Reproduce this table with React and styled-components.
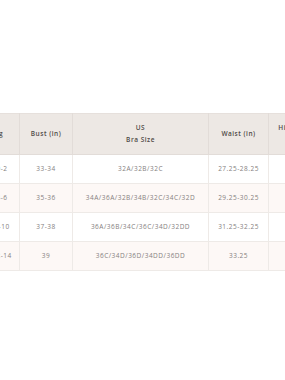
import React, { useLayoutEffect, useRef } from "react";
import styled, { createGlobalStyle } from "styled-components";

const Global = createGlobalStyle`
  html, body { margin: 0; padding: 0; background: #ffffff; }
  body { font-family: "Open Sans", "Noto Sans", sans-serif; }
  * { box-sizing: border-box; }
`;

const Page = styled.div`
  width: 285px;
  height: 380px;
  padding-top: 113px;
  background: #ffffff;
  overflow: hidden;
`;

const Scroller = styled.div`
  width: 285px;
  overflow-x: auto;
  scrollbar-width: none;
  &::-webkit-scrollbar { display: none; }
`;

const Table = styled.table`
  border-collapse: collapse;
  table-layout: fixed;
  width: 484px;
  font-size: 6.5px;
  letter-spacing: 0.5px;
`;

const HeadCell = styled.th`
  background: #ede8e4;
  color: #4f4a47;
  font-weight: 600;
  line-height: 12px;
  padding: ${(p) => (p.$first ? "8px 16px 8px 2px" : "8px 4px")};
  text-align: center;
  border: 1px solid #e2dcd8;
  border-top-color: #e6e0dc;
`;

const Row = styled.tr`
  background: ${(p) => (p.$alt ? "#fdf8f6" : "#ffffff")};
`;

const Cell = styled.td`
  color: #858080;
  font-weight: 400;
  line-height: 12px;
  height: 29px;
  padding: ${(p) => (p.$first ? "0 1px 0 6px" : "0 4px")};
  text-align: center;
  white-space: nowrap;
  border: 1px solid #eeeae7;
`;

const cols = [40, 53, 136, 60, 66, 60, 69];

const rows = [
  ["0-2", "33-34", "32A/32B/32C", "27.25-28.25", "35-36", "28", "XS"],
  ["4-6", "35-36", "34A/36A/32B/34B/32C/34C/32D", "29.25-30.25", "37-38", "28", "S"],
  ["8-10", "37-38", "36A/36B/34C/36C/34D/32DD", "31.25-32.25", "39-40", "28", "M"],
  ["12-14", "39", "36C/34D/36D/34DD/36DD", "33.25", "41", "28", "L"],
];

export default function App() {
  const ref = useRef(null);
  useLayoutEffect(() => {
    if (ref.current) ref.current.scrollLeft = 21;
  }, []);
  return (
    <Page>
      <Global />
      <Scroller ref={ref}>
        <Table>
          <colgroup>
            {cols.map((w, i) => (
              <col key={i} style={{ width: w }} />
            ))}
          </colgroup>
          <thead>
            <tr>
              <HeadCell $first>Sizing</HeadCell>
              <HeadCell>Bust (in)</HeadCell>
              <HeadCell>
                US
                <br />
                Bra Size
              </HeadCell>
              <HeadCell>Waist (in)</HeadCell>
              <HeadCell>
                Hips (inches)
                <br />
                Fullest
              </HeadCell>
              <HeadCell>Inseam (in)</HeadCell>
              <HeadCell>Alpha</HeadCell>
            </tr>
          </thead>
          <tbody>
            {rows.map((r, i) => (
              <Row key={i} $alt={i % 2 === 1}>
                {r.map((v, j) => (
                  <Cell key={j} $first={j === 0}>
                    {v}
                  </Cell>
                ))}
              </Row>
            ))}
          </tbody>
        </Table>
      </Scroller>
    </Page>
  );
}
